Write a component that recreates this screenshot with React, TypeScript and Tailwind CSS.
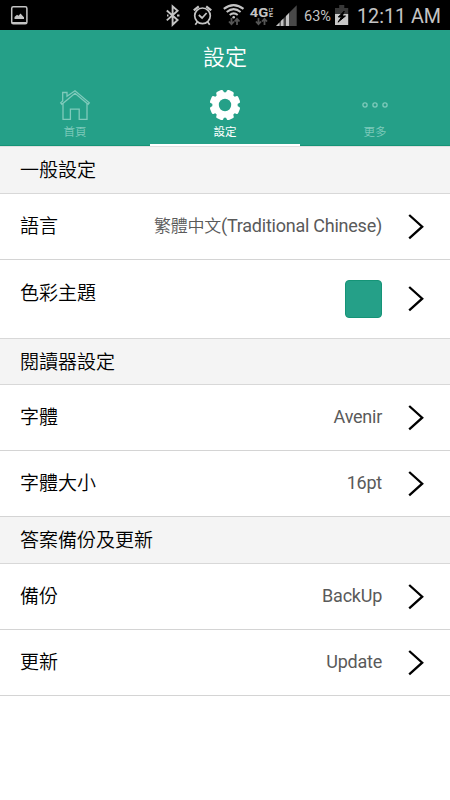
import React from "react";

const Chevron = () => (
  <svg className="ml-[26px] h-[26px] w-4 shrink-0" viewBox="0 0 16 26" fill="none" stroke="#000" strokeWidth="2.3">
    <path d="M1.2 1 14.200 12.700 1.2 24.400" />
  </svg>
);

function StatusBar() {
  return (
    <div className="flex h-[30px] shrink-0 items-start bg-black font-['Roboto',sans-serif] text-[#c4c4c4]">
      <svg className="ml-[10px] h-[30px] w-5 shrink-0" viewBox="10 0 20 30">
        <rect x="11.7" y="6.8" width="15.2" height="17" rx="1.6" fill="none" stroke="#c4c4c4" strokeWidth="1.5" />
        <path d="M12 22h14.500v2H12zM14.500 19v-2l2.500-2.300 1.500 1 2-2.200 1.800 2 1.700 1.800V19z" fill="#c4c4c4" />
      </svg>
      <svg className="ml-[135px] h-[30px] w-4 shrink-0" viewBox="165 0 16 30" fill="none" stroke="#c4c4c4" strokeWidth="1.9">
        <path d="m166.800 10.500 10.800 9.500-5 4.700V6.300l5 4.500-10.800 9.600" />
        <path d="M167 15.500h1.500M177 15.500h2.500" strokeWidth="2.200" />
      </svg>
      <svg className="ml-[11px] h-[30px] w-[22px] shrink-0" viewBox="192 0 22 30" fill="none" stroke="#c4c4c4" strokeWidth="1.700">
        <circle cx="202.500" cy="15.800" r="7.800" />
        <path d="m193.800 10.300 5-4M206.200 6.300l5 4" strokeWidth="2.300" />
        <path d="m198.800 15 3.300 3 4.500-5M197.500 21.800l-2.200 3M207.500 21.800l2.200 3" />
      </svg>
      <svg className="ml-[8px] h-[30px] w-6 shrink-0" viewBox="222 0 24 30" fill="none" stroke="#c4c4c4" strokeWidth="2">
        <path d="M223.800 8.900q9.800-7.600 19.700 0M226.700 12q6.900-5.700 13.900 0M229.700 15q4-3.300 8 0" />
        <circle cx="233.700" cy="17.200" r="1.300" fill="#c4c4c4" stroke="none" />
        <path d="M231.500 18v6M229 21.500l2.500 2.700 2.500-2.700M237 25v-6M234.600 21.500l2.400-2.700 2.500 2.700" stroke="#555" strokeWidth="1.800" />
      </svg>
      <svg className="ml-[3px] h-[30px] w-[26px] shrink-0" viewBox="249 0 26 30" fill="none" stroke="#c4c4c4" strokeWidth="1.900">
        <text x="249.700" y="16.800" textLength="18.500" lengthAdjust="spacingAndGlyphs" fontSize="13" fontWeight="700" fill="#c4c4c4" stroke="none">4G</text>
        <text x="268.700" y="11.500" textLength="4.700" lengthAdjust="spacingAndGlyphs" fontSize="5" fontWeight="700" fill="#c4c4c4" stroke="none">LT</text>
        <text x="269" y="16.500" textLength="4" lengthAdjust="spacingAndGlyphs" fontSize="5.500" fontWeight="700" fill="#c4c4c4" stroke="none">E</text>
        <path d="M258.500 18v6M256 21.500l2.500 2.700 2.500-2.700M264.500 25v-6M262 21.500l2.500-2.700 2.500 2.700" stroke="#555" strokeWidth="1.800" />
      </svg>
      <svg className="ml-px h-[30px] w-[22px] shrink-0" viewBox="276 0 22 30">
        <path d="M276 26 296.700 5.200V26z" fill="#484848" />
        <path d="M276 26l3.500-3.500V26zM280.800 26v-5l2.700-2.500V26zM286 26v-10l3-3V26z" fill="#c4c4c4" />
      </svg>
      <span className="ml-[6px] mt-[2px] w-[31px] shrink-0 whitespace-nowrap text-[14.500px] leading-[30px]">63%</span>
      <svg className="h-[30px] w-[14px] shrink-0" viewBox="335 0 14 30">
        <path d="M335 8h4.200V5h5.100v3h3.900v6H335z" fill="#383838" />
        <path d="M335 14h13.200v11H335z" fill="#c8c8c8" />
        <path d="m344.300 11-6 6h3.200L338 22.200l7.500-6.200h-3.200z" fill="#000" stroke="#000" strokeWidth="1" />
      </svg>
      <span className="ml-[8px] mt-[2px] whitespace-nowrap text-[19.700px] leading-[29px]">12:11 AM</span>
    </div>
  );
}

function Tab({ label, active, children }: { label: string; active?: boolean; children: React.ReactNode }) {
  return (
    <div className={active ? "flex w-[150px] flex-col items-center border-b-2 border-white text-white" : "flex w-[150px] flex-col items-center border-b border-[#159477] font-[350] text-[#7fcabb]"}>
      <svg className="h-8 w-8" viewBox="0 0 32 32">{children}</svg>
      <span className="mt-[2px] text-[11.500px] leading-4">{label}</span>
    </div>
  );
}

function Header() {
  return (
    <header className="flex h-[116px] shrink-0 flex-col bg-[#25a088]">
      <h1 className="h-[59px] text-center text-[22px] font-[350] leading-[51px] text-white">設定</h1>
      <nav className="flex h-[57px]">
        <Tab label="首頁">
          <g fill="none" stroke="currentColor" strokeWidth="1.300">
            <path d="M8 7.300V3.500H3.700V12L1.700 13.800l1.200 1.500L16 4.300l13.100 11 1.200-1.500L16 1.800z" />
            <path d="M4 14.500v15.800h7.400V20.200h8.800v10.100H28V14.500" />
          </g>
        </Tab>
        <Tab label="設定" active>
          <g fill="currentColor">
            <circle cx="16" cy="16" r="12.700" />
            <rect x="12.200" y="0.700" width="7.600" height="30.600" rx="1.800" transform="rotate(22.500 16 16)" />
            <rect x="12.200" y="0.700" width="7.600" height="30.600" rx="1.800" transform="rotate(67.500 16 16)" />
            <rect x="12.200" y="0.700" width="7.600" height="30.600" rx="1.800" transform="rotate(112.500 16 16)" />
            <rect x="12.200" y="0.700" width="7.600" height="30.600" rx="1.800" transform="rotate(157.500 16 16)" />
          </g>
          <circle cx="16" cy="16" r="6.200" fill="#25a088" />
        </Tab>
        <Tab label="更多">
          <g fill="none" stroke="currentColor" strokeWidth="1.300"><circle cx="6" cy="16" r="2.100" /><circle cx="16" cy="16" r="2.100" /><circle cx="26" cy="16" r="2.100" /></g>
        </Tab>
      </nav>
    </header>
  );
}

const Section = ({ title, size }: { title: string; size: string }) => (
  <h2 className={`flex shrink-0 items-center border-b border-[#d8d8d8] bg-[#f4f4f4] pb-px pl-5 text-[19px] font-[350] text-black ${size}`}>{title}</h2>
);

const Row = ({ label, native, value }: { label: string; native?: string; value: string }) => (
  <div className="flex h-[66px] shrink-0 items-center border-b border-[#d4d4d4] pl-5 pr-[26px] text-black">
    <span className="mb-[3px] text-[19px] font-[350] leading-7">{label}</span>
    <span className="mb-px ml-auto font-['Roboto','Noto_Sans_CJK_TC',sans-serif] text-[18px] leading-7 tracking-[-0.24px] text-[#5a5a5a]">
      {native && <span className="font-['Noto_Sans_CJK_TC',sans-serif] text-[17px] font-[350] leading-none">{native}</span>}
      {value}
    </span>
    <Chevron />
  </div>
);

export default function App() {
  return (
    <div className="flex h-[800px] w-[450px] flex-col overflow-hidden bg-white font-['Noto_Sans_CJK_TC',sans-serif]">
      <StatusBar />
      <Header />
      <main className="flex flex-col">
        <Section title="一般設定" size="h-12 border-t border-t-[#e0e0e0]" />
        <Row label="語言" native="繁體中文" value="(Traditional Chinese)" />
        <div className="flex h-[79px] shrink-0 items-center border-b border-[#d8d8d8] pl-5 pr-[26px] text-black">
          <span className="mb-[15px] text-[19px] font-[350] leading-7">色彩主題</span>
          <span className="ml-auto h-[38px] w-[37px] rounded-[4px] border border-[#159477] bg-[#25a088]" />
          <Chevron />
        </div>
        <Section title="閱讀器設定" size="h-[46px]" />
        <Row label="字體" value="Avenir" />
        <Row label="字體大小" value="16pt" />
        <Section title="答案備份及更新" size="h-[47px]" />
        <Row label="備份" value="BackUp" />
        <Row label="更新" value="Update" />
      </main>
    </div>
  );
}
